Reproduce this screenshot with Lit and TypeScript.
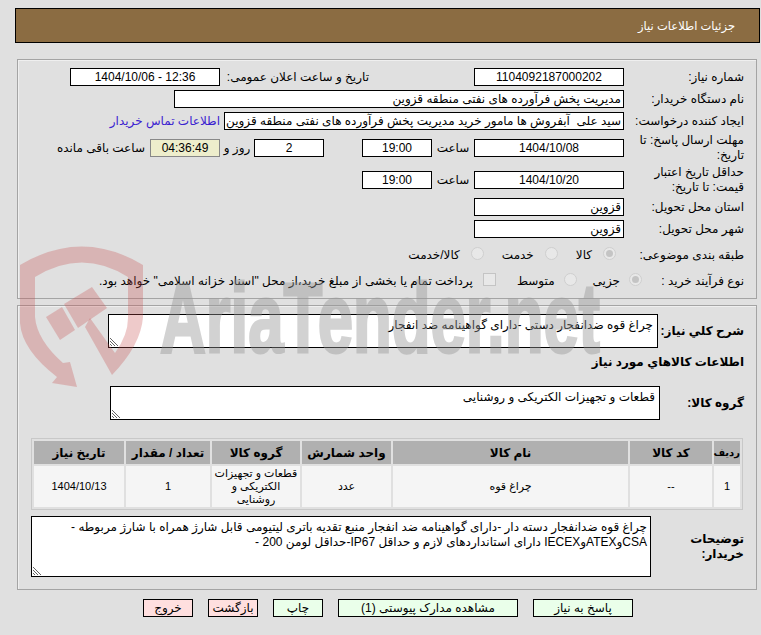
import {LitElement, html, css} from 'lit';
import {customElement} from 'lit/decorators.js';

@customElement('app-root')
export class AppRoot extends LitElement {
  static styles = css`
    :host {
      display: block;
      position: relative;
      width: 761px;
      height: 635px;
      overflow: hidden;
      background: #e0e0e0;
      font-family: 'Liberation Sans', 'DejaVu Sans', sans-serif;
      font-size: 12px;
      color: #000;
    }
    .page {
      direction: rtl;
      padding: 8px 1px 0 15px;
      display: flex;
      flex-direction: column;
    }
    .watermark {
      position: absolute;
      left: 0;
      top: 0;
    }
    .header {
      height: 35px;
      box-sizing: border-box;
      background: #8b6c42;
      border: 1px solid #000;
      color: #fff;
      display: flex;
      align-items: center;
      padding-right: 24px;
      font-size: 11.5px;
    }
    .panel {
      border: 1px solid #a4a4a4;
      box-shadow: inset 1px 1px 0 #efefef;
      box-sizing: border-box;
      padding-top: 8px;
      margin-left: 2px;
      margin-right: 3px;
    }
    .p1 {
      margin-top: 16px;
      height: 240px;
    }
    .p2 {
      margin-top: 6px;
      height: 285px;
    }
    .row {
      display: flex;
      align-items: center;
      height: 18px;
      margin-bottom: 4px;
    }
    .row4 {
      margin-top: 9px;
      margin-bottom: 14px;
    }
    .row5 {
      margin-bottom: 9px;
    }
    .row7 {
      margin-bottom: 8px;
    }
    .row8 {
      margin-bottom: 8px;
    }
    .label {
      width: 132px;
      padding-right: 12px;
      box-sizing: border-box;
      flex: none;
      line-height: 15px;
    }
    .label.public {
      width: 254px;
      padding-right: 105px;
    }
    .label.process {
      width: 108px;
    }
    .box {
      box-sizing: border-box;
      height: 18px;
      width: 150px;
      flex: none;
      background: #fff;
      border: 1px solid #000;
      display: flex;
      align-items: center;
      justify-content: center;
      white-space: pre;
      overflow: hidden;
    }
    .box.start {
      justify-content: flex-start;
      padding: 0 2px;
    }
    .box.w450 {
      width: 450px;
    }
    .box.w400 {
      width: 400px;
    }
    .time {
      width: 70px;
    }
    .remain {
      background: #eeeecc;
      border-color: #888;
      width: 70px;
    }
    .sep {
      flex: none;
      text-align: center;
      white-space: nowrap;
    }
    .sep.hour {
      width: 42px;
    }
    .sep.blank {
      width: 38px;
    }
    .sep.day {
      width: 34px;
    }
    .sep.left {
      margin-right: 5px;
    }
    .link {
      color: #3a22d0;
      margin-right: 4px;
      white-space: nowrap;
    }
    .radio {
      width: 13px;
      height: 13px;
      border-radius: 50%;
      border: 1px solid #cfcfcf;
      background: #e8e8e8;
      box-sizing: border-box;
      flex: none;
      margin-bottom: 4px;
      display: flex;
      align-items: center;
      justify-content: center;
    }
    .radio.on::after {
      content: '';
      width: 7px;
      height: 7px;
      border-radius: 50%;
      background: #c4c4c4;
    }
    .r8a { margin: 0 8px 4px 11px; }
    .r8b { margin: 0 18px 4px 11px; }
    .r9a { margin: 0 6px 4px 9px; }
    .r9b { margin: 0 16px 4px 9px; }
    .check {
      width: 13px;
      height: 13px;
      border: 1px solid #c4c4c4;
      background: #e8e8e8;
      box-sizing: border-box;
      margin: 0 21px 4px 10px;
      flex: none;
    }
    .bold {
      font-weight: bold;
    }
    .tall {
      height: 34px;
      margin-bottom: 0;
    }
    .title {
      margin: 6px 12px 16px 0;
      height: 16px;
      line-height: 16px;
    }
    .l98 { width: 98px; }
    .l96 { width: 96px; }
    .l105 { width: 105px; }
    .area {
      position: relative;
      box-sizing: border-box;
      background: #fff;
      border: 1px solid #000;
      padding: 3px 4px 0 2px;
      line-height: 15px;
      width: 550px;
      height: 34px;
      flex: none;
    }
    .area.desc {
      width: 620px;
      height: 61px;
      padding-right: 3px;
    }
    .desc-row {
      height: 61px;
      margin: 6px 0 0;
    }
    .grip {
      position: absolute;
      left: 1px;
      bottom: 1px;
    }
    table {
      margin: 18px 13px 0 13px;
      width: 712px;
      border: 1px solid #c8c8c8;
      border-spacing: 2px;
      table-layout: fixed;
    }
    .c1 { width: 26px; }
    .c2 { width: 82px; }
    .c3 { width: 235px; }
    .c4 { width: 89px; }
    .c5 { width: 88px; }
    .c6 { width: 84px; }
    th {
      background: #b0b0b0;
      height: 23px;
      padding: 0;
      white-space: nowrap;
    }
    th.tight {
      font-size: 10px;
    }
    td {
      background: #f5f5f5;
      height: 41px;
      padding: 0;
      text-align: center;
      line-height: 13px;
      font-size: 11px;
    }
    .buttons {
      display: flex;
      gap: 15px;
      margin-top: 9px;
      margin-right: 127px;
    }
    .btn {
      box-sizing: border-box;
      height: 18px;
      width: 50px;
      border: 1px solid #000;
      display: flex;
      align-items: center;
      justify-content: center;
      white-space: nowrap;
      background: #eaffea;
    }
    .btn.reply {
      width: 100px;
    }
    .btn.docs {
      width: 180px;
    }
    .btn.red {
      background: #ffdfdf;
    }
  `;

  grip() {
    return html`<svg class="grip" width="9" height="9" viewBox="0 0 9 9"><path d="M0 1L8 9M0 4L5 9M0 7L2 9" stroke="#666" fill="none"/></svg>`;
  }

  render() {
    return html`
      <div class="page">
        <div class="header">جزئیات اطلاعات نیاز</div>

        <div class="panel p1">
          <div class="row">
            <div class="label">شماره نیاز:</div>
            <div class="box">1104092187000202</div>
            <div class="label public">تاریخ و ساعت اعلان عمومی:</div>
            <div class="box">12:36 - 1404/10/06</div>
          </div>
          <div class="row">
            <div class="label">نام دستگاه خریدار:</div>
            <div class="box start w450">مدیریت پخش فرآورده های نفتی منطقه قزوین</div>
          </div>
          <div class="row">
            <div class="label">ایجاد کننده درخواست:</div>
            <div class="box start w400">سید علی  آبفروش ها مامور خرید مدیریت پخش فرآورده های نفتی منطقه قزوین</div>
            <div class="link">اطلاعات تماس خریدار</div>
          </div>
          <div class="row row4">
            <div class="label">مهلت ارسال پاسخ: تا تاریخ:</div>
            <div class="box">1404/10/08</div>
            <div class="sep hour">ساعت</div>
            <div class="box time">19:00</div>
            <div class="sep blank"></div>
            <div class="box time">2</div>
            <div class="sep day">روز و</div>
            <div class="box remain">04:36:49</div>
            <div class="sep left">ساعت باقی مانده</div>
          </div>
          <div class="row row5">
            <div class="label">حداقل تاریخ اعتبار قیمت: تا تاریخ:</div>
            <div class="box">1404/10/20</div>
            <div class="sep hour">ساعت</div>
            <div class="box time">19:00</div>
          </div>
          <div class="row">
            <div class="label">استان محل تحویل:</div>
            <div class="box start">قزوین</div>
          </div>
          <div class="row row7">
            <div class="label">شهر محل تحویل:</div>
            <div class="box start">قزوین</div>
          </div>
          <div class="row row8">
            <div class="label">طبقه بندی موضوعی:</div>
            <div class="radio on r8a"></div><div>کالا</div>
            <div class="radio r8b"></div><div>خدمت</div>
            <div class="radio r8b"></div><div>کالا/خدمت</div>
          </div>
          <div class="row">
            <div class="label process">نوع فرآیند خرید :</div>
            <div class="radio on r9a"></div><div>جزیی</div>
            <div class="radio r9b"></div><div>متوسط</div>
            <div class="check"></div>
            <div>پرداخت تمام یا بخشی از مبلغ خرید،از محل "اسناد خزانه اسلامی" خواهد بود.</div>
          </div>
        </div>

        <div class="panel p2">
          <div class="row tall">
            <div class="label bold l98">شرح کلي نياز:</div>
            <div class="area">چراغ قوه ضدانفجار دستی -دارای گواهینامه ضد انفجار${this.grip()}</div>
          </div>
          <div class="bold title">اطلاعات کالاهاي مورد نياز</div>
          <div class="row tall">
            <div class="label bold l96">گروه کالا:</div>
            <div class="area">قطعات و تجهیزات الکتریکی و روشنایی${this.grip()}</div>
          </div>
          <table>
            <colgroup>
              <col class="c1"/><col class="c2"/><col class="c3"/><col class="c4"/>
              <col class="c5"/><col class="c6"/><col/>
            </colgroup>
            <tr><th class="tight">ردیف</th><th>کد کالا</th><th>نام کالا</th><th>واحد شمارش</th><th>گروه کالا</th><th>تعداد / مقدار</th><th>تاریخ نیاز</th></tr>
            <tr><td>1</td><td>--</td><td>چراغ قوه</td><td>عدد</td><td>قطعات و تجهیزات الکتریکی و روشنایی</td><td>1</td><td>1404/10/13</td></tr>
          </table>
          <div class="row desc-row">
            <div class="label bold l105">توضیحات خریدار:</div>
            <div class="area desc">چراغ قوه ضدانفجار دسته دار -دارای گواهینامه ضد انفجار منبع تقدیه باتری لیتیومی قابل شارژ همراه با شارژ مربوطه - CSAوATEXوIECEX دارای استانداردهای لازم و حداقل IP67-حداقل لومن 200 -${this.grip()}</div>
          </div>
        </div>

        <div class="buttons">
          <div class="btn reply">پاسخ به نیاز</div>
          <div class="btn docs">مشاهده مدارک پیوستی (1)</div>
          <div class="btn">چاپ</div>
          <div class="btn red">بازگشت</div>
          <div class="btn red">خروج</div>
        </div>
      </div>

      <svg class="watermark" width="761" height="635" viewBox="0 0 761 635">
        <g fill="rgb(200,80,80)" fill-opacity="0.3">
          <path d="M20 265Q82 228 143 265V317Q141 345 112 375L85 327L90 318L115 353Q128 335 128 318V277Q82 248 35 277V317Q37 340 63 363L70 362L77 387L52 383L57 377Q22 350 20 323Z"/>
          <path d="M46 317L62 307L75 330L60 340Z"/>
          <path d="M64 304L92 287L107 308L78 328Z"/>
        </g>
        <text x="160" y="352" font-family="'Liberation Sans', sans-serif" font-weight="bold" font-size="98" fill="rgb(150,150,150)" stroke="rgb(150,150,150)" stroke-width="3" opacity="0.42" textLength="440" lengthAdjust="spacingAndGlyphs">AriaTender.net</text>
      </svg>
    `;
  }
}
